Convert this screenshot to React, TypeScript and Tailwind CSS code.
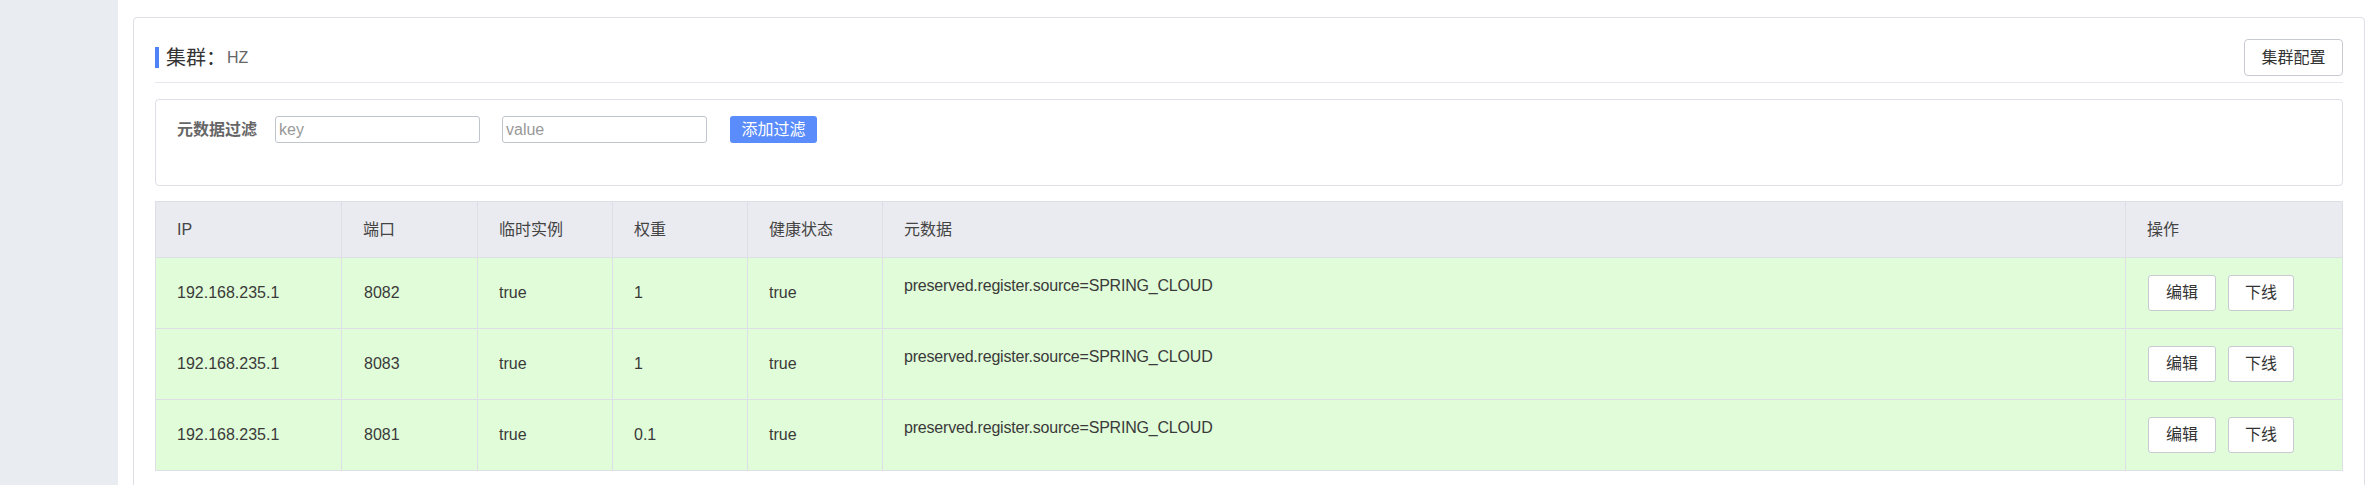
const rows = [
  { ip: '192.168.235.1', port: '8082', ephemeral: 'true', weight: '1', healthy: 'true' },
  { ip: '192.168.235.1', port: '8083', ephemeral: 'true', weight: '1', healthy: 'true' },
  { ip: '192.168.235.1', port: '8081', ephemeral: 'true', weight: '0.1', healthy: 'true' },
];

const font = { fontFamily: '"Liberation Sans", "Noto Sans CJK SC", sans-serif' };

export default function App() {
  return (
    <div className="flex h-[485px] overflow-hidden bg-white text-[#333]" style={font}>
      {/* Sidebar */}
      <div className="w-[118px] shrink-0 bg-[#e9ecf1]" />

      <div className="flex-1 pl-[15px] pr-[4px] pt-[17px]">
        <div className="rounded-[4px] border border-[#dcdfe6] px-[21px] pb-[20px]">
          {/* Title */}
          <div className="flex items-center justify-between border-b border-[#e4e7ed] pt-[21px] pb-[6px]">
            <div className="flex items-center">
              <span className="mr-[7px] h-[21px] w-[4px] bg-[#4f82f7]" />
              <span className="text-[20px] leading-none text-[#333]">集群：</span>
              <span className="ml-[1px] text-[16px] leading-none text-[#666]">HZ</span>
            </div>
            <button className="h-[37px] w-[99px] rounded-[4px] border border-[#c8cad2] bg-white text-[16px] text-[#333]">
              集群配置
            </button>
          </div>

          {/* Filter */}
          <div className="mt-[16px] h-[87px] rounded-[4px] border border-[#dcdfe6] pl-[21px] pt-[16px]">
            <div className="flex items-center">
              <span className="text-[16px] font-bold text-[#666]">元数据过滤</span>
              <input
                placeholder="key"
                className="ml-[18px] h-[27px] w-[205px] rounded-[3px] border border-[#c0c4cc] px-[3px] text-[16px] placeholder:text-[#999] outline-none"
              />
              <input
                placeholder="value"
                className="ml-[22px] h-[27px] w-[205px] rounded-[3px] border border-[#c0c4cc] px-[3px] text-[16px] placeholder:text-[#999] outline-none"
              />
              <button className="ml-[23px] h-[27px] w-[87px] rounded-[3px] bg-[#5a8cfb] text-[16px] text-white">
                添加过滤
              </button>
            </div>
          </div>

          {/* Table */}
          <table className="mt-[15px] w-full table-fixed border-collapse text-[16px]">
            <colgroup>
              <col className="w-[186px]" />
              <col className="w-[136px]" />
              <col className="w-[135px]" />
              <col className="w-[135px]" />
              <col className="w-[135px]" />
              <col />
              <col className="w-[217px]" />
            </colgroup>
            <thead>
              <tr className="h-[56px] bg-[#eaebf0] text-left text-[#444]">
                {['IP', '端口', '临时实例', '权重', '健康状态', '元数据', '操作'].map((h) => (
                  <th key={h} className="border border-[#dcdfe6] pl-[21px] font-normal">
                    {h}
                  </th>
                ))}
              </tr>
            </thead>
            <tbody>
              {rows.map((r, i) => (
                <tr key={i} className="h-[71px] bg-[#e1fcd9] text-[#3a3a3a]">
                  <td className="border border-[#dcdfe6] pl-[21px]">{r.ip}</td>
                  <td className="border border-[#dcdfe6] pl-[22px]">{r.port}</td>
                  <td className="border border-[#dcdfe6] pl-[21px]">{r.ephemeral}</td>
                  <td className="border border-[#dcdfe6] pl-[21px]">{r.weight}</td>
                  <td className="border border-[#dcdfe6] pl-[21px]">{r.healthy}</td>
                  <td className="border border-[#dcdfe6] pl-[21px] pt-[16px] align-top leading-[24px] tracking-[-0.2px]">
                    preserved.register.source=SPRING_CLOUD
                  </td>
                  <td className="border border-[#dcdfe6] pl-[22px]">
                    <div className="flex gap-[12px]">
                      <button className="h-[36px] w-[68px] rounded-[3px] border border-[#c8cad2] bg-white text-[#333]">
                        编辑
                      </button>
                      <button className="h-[36px] w-[66px] rounded-[3px] border border-[#c8cad2] bg-white text-[#333]">
                        下线
                      </button>
                    </div>
                  </td>
                </tr>
              ))}
            </tbody>
          </table>
        </div>
      </div>
    </div>
  );
}
